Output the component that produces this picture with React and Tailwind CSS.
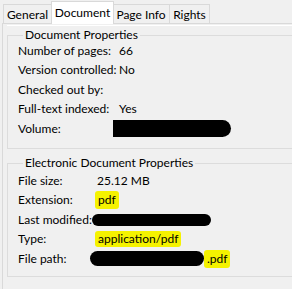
const font = { fontFamily: 'Lato, "Noto Sans", "Liberation Sans", sans-serif' };

function Row({ label, labelW, children }) {
  return (
    <div className="flex items-center h-[19.5px] whitespace-nowrap">
      <span className="shrink-0" style={{ width: labelW }}>{label}</span>
      <span className="flex items-center">{children}</span>
    </div>
  );
}

function Mark({ children, className = '' }) {
  return (
    <span className={`bg-[#f5f200] rounded-[3px] px-[3px] ${className}`}>{children}</span>
  );
}

function Blob({ className }) {
  return <span className={`block bg-black rounded-full ${className}`} />;
}

export default function App() {
  const tabs = [
    { name: 'General', w: 'w-[49px]' },
    { name: 'Document', w: 'w-[63px]' },
    { name: 'Page Info', w: 'w-[58px]' },
    { name: 'Rights', w: 'w-[41px]' },
  ];
  return (
    <div
      className="w-[292px] h-[289px] overflow-hidden bg-[#f0f0f0] text-[12px] leading-[16px] text-black"
      style={font}
    >
      <div className="flex items-end h-[23px] pl-[3px]">
        {tabs.map((t) =>
          t.name === 'Document' ? (
            <div
              key={t.name}
              className={`${t.w} h-[23px] pt-[3px] text-center bg-white border-x border-t border-[#d9d9d9] relative top-[1px] -mx-px z-10`}
            >
              {t.name}
            </div>
          ) : (
            <div
              key={t.name}
              className={`${t.w} h-[19px] pt-[2px] text-center border-x border-t border-[#d9d9d9] -ml-px first:ml-0`}
            >
              {t.name}
            </div>
          )
        )}
      </div>
      <div className="ml-[2px] h-[266px] border-l border-t border-[#d9d9d9] pl-[4px] pt-[1px]">
        <div className="w-[310px] border-t border-white pt-[1px]">
          <fieldset className="border border-[#dcdcdc] h-[122px] px-[10px]">
            <legend className="ml-[5px] px-[2px]">Document Properties</legend>
            <div className="-mt-[2px]">
              <Row label="Number of pages:" labelW={101}>66</Row>
              <Row label="Version controlled:" labelW={101}>No</Row>
              <Row label="Checked out by:" labelW={101} />
              <Row label="Full-text indexed:" labelW={101}>Yes</Row>
              <Row label="Volume:" labelW={101}>
                <Blob className="w-[118px] h-[17px] -ml-[6px] rounded-l-[10px]" />
              </Row>
            </div>
          </fieldset>
          <fieldset className="border border-[#dcdcdc] h-[122px] px-[10px] mt-[6px]">
            <legend className="ml-[5px] px-[2px]">Electronic Document Properties</legend>
            <div className="pt-0">
              <Row label="File size:" labelW={79}>25.12 MB</Row>
              <Row label="Extension:" labelW={79}>
                <Mark className="-ml-[2px] py-[1px]">pdf</Mark>
              </Row>
              <Row label="Last modified:" labelW={79}>
                <Blob className="w-[119px] h-[12px] -ml-[5px]" />
              </Row>
              <Row label="Type:" labelW={79}>
                <Mark className="-ml-[2px]">application/pdf</Mark>
              </Row>
              <Row label="File path:" labelW={79}>
                <Blob className="w-[114px] h-[15px] -ml-[7px]" />
                <Mark className="px-[1px] py-[1px]">.pdf</Mark>
              </Row>
            </div>
          </fieldset>
        </div>
      </div>
    </div>
  );
}
